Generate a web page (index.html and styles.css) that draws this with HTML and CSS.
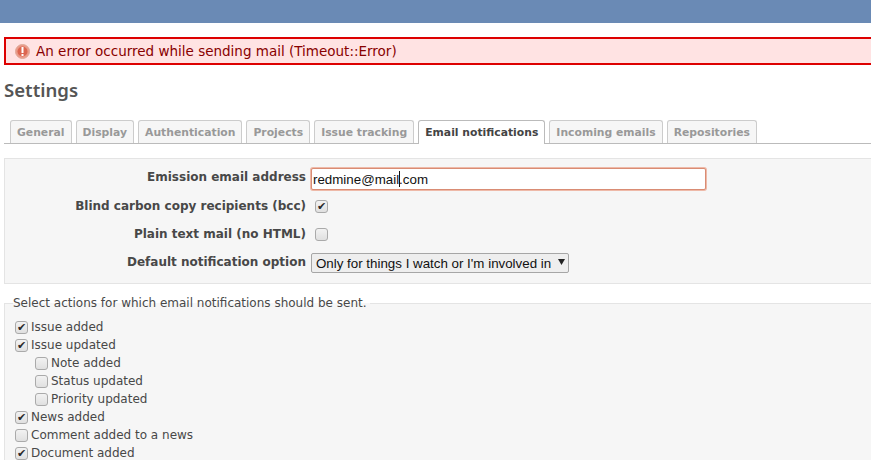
FILE: index.html
```html
<!DOCTYPE html>
<html lang="en">
<head>
  <meta charset="UTF-8">
  <title>Settings</title>
  <link rel="stylesheet" href="styles.css">
</head>
<body>

<div class="top-bar"></div>

<div class="content">
  <div class="flash-error">
    <svg class="flash-icon" width="15" height="15" viewBox="0 0 15 15">
      <circle cx="7.5" cy="7.5" r="7" fill="#eb9a88" stroke="#dfa898"/>
      <circle cx="7.5" cy="7.5" r="5" fill="#dc6650"/>
      <rect x="6.5" y="3" width="2" height="6" fill="#fff"/>
      <rect x="6.5" y="10" width="2" height="2" fill="#fff"/>
    </svg>
    An error occurred while sending mail (Timeout::Error)
  </div>

  <h2 class="page-title">Settings</h2>

  <ul class="tabs">
    <li class="tab">General</li>
    <li class="tab">Display</li>
    <li class="tab">Authentication</li>
    <li class="tab">Projects</li>
    <li class="tab">Issue tracking</li>
    <li class="tab selected">Email notifications</li>
    <li class="tab">Incoming emails</li>
    <li class="tab">Repositories</li>
  </ul>

  <div class="box">
    <div class="row row-email">
      <label class="row-label">Emission email address</label>
      <span class="email-wrap">
        <input class="email-input" type="text" value="redmine@mail.com">
        <span class="caret"></span>
      </span>
    </div>
    <div class="row row-check">
      <label class="row-label">Blind carbon copy recipients (bcc)</label>
      <input class="check" type="checkbox" checked>
    </div>
    <div class="row row-check">
      <label class="row-label">Plain text mail (no HTML)</label>
      <input class="check" type="checkbox">
    </div>
    <div class="row row-select">
      <label class="row-label">Default notification option</label>
      <select class="notify-select">
        <option>Only for things I watch or I'm involved in</option>
      </select>
    </div>
  </div>

  <fieldset class="actions">
    <legend>Select actions for which email notifications should be sent.</legend>
    <label class="action"><input class="check" type="checkbox" checked> Issue added</label>
    <label class="action"><input class="check" type="checkbox" checked> Issue updated</label>
    <label class="action sub"><input class="check" type="checkbox"> Note added</label>
    <label class="action sub"><input class="check" type="checkbox"> Status updated</label>
    <label class="action sub"><input class="check" type="checkbox"> Priority updated</label>
    <label class="action"><input class="check" type="checkbox" checked> News added</label>
    <label class="action"><input class="check" type="checkbox"> Comment added to a news</label>
    <label class="action"><input class="check" type="checkbox" checked> Document added</label>
  </fieldset>
</div>

</body>
</html>
```

FILE: styles.css
```css
html, body {
  height: 460px;
  overflow: hidden;
}

body {
  margin: 0;
  font-family: "DejaVu Sans", sans-serif;
  font-size: 12px;
  color: #484848;
  background: #fff;
}

.top-bar {
  height: 23px;
  background: #6a8ab5;
}

.content {
  padding: 14px 0 0 4px;
}

.flash-error {
  display: flex;
  align-items: center;
  gap: 6px;
  height: 24px;
  padding-left: 9px;
  border: 2px solid #dd0000;
  border-right: 0;
  background: #ffe3e3;
  color: #880000;
  font-size: 13.5px;
}

.flash-icon {
  flex: none;
}

.page-title {
  margin: 13px 0 0;
  font-family: "Noto Sans", sans-serif;
  font-size: 18.6px;
  line-height: 24px;
  font-weight: 600;
  color: #555;
}

.tabs {
  display: flex;
  gap: 4px;
  list-style: none;
  margin: 18px 0 0;
  padding: 0 0 0 6px;
  height: 23px;
  border-bottom: 1px solid #bbb;
}

.tab {
  height: 22px;
  padding: 0 6px;
  border: 1px solid #ccc;
  border-bottom: 0;
  border-radius: 3px 3px 0 0;
  background: #f6f6f6;
  color: #999;
  font-size: 10.8px;
  font-weight: bold;
  line-height: 23px;
}

.tab.selected {
  height: 23px;
  margin-bottom: -1px;
  background: #fff;
  border-color: #bbb;
  color: #444;
}

.box {
  margin-top: 14px;
  height: 124px;
  border: 1px solid #e4e4e4;
  border-right: 0;
  background: #f6f6f6;
}

.row {
  display: flex;
  align-items: center;
}

.row-label {
  width: 301px;
  margin-right: 5px;
  text-align: right;
  font-weight: bold;
}

.row-email {
  height: 22px;
  margin-top: 9px;
}

.row-email .row-label {
  margin-bottom: 4px;
}

.row-check {
  height: 28px;
}

.row-email + .row-check {
  margin-top: 2px;
}

.row-select {
  height: 28px;
}

.email-wrap {
  position: relative;
  display: block;
}

.email-input {
  display: block;
  box-sizing: border-box;
  width: 395px;
  height: 22px;
  margin: 0;
  padding: 0 1px;
  border: 1px solid #d98c74;
  border-radius: 2px;
  outline: 0;
  box-shadow: 0 0 0 1px #eeb9a8;
  background: #fff;
  font-family: "Liberation Sans", sans-serif;
  font-size: 13.33px;
  color: #111;
}

.caret {
  position: absolute;
  left: 88px;
  top: 3px;
  width: 1px;
  height: 16px;
  background: #111;
}

.check {
  appearance: none;
  box-sizing: border-box;
  display: inline-flex;
  align-items: center;
  justify-content: center;
  width: 13px;
  height: 13px;
  margin: 0 0 0 4px;
  border: 1px solid #aaa;
  border-radius: 3px;
  background: linear-gradient(#f2f2f2, #e0e0e0);
  color: #2a2a2a;
  font-size: 11px;
  line-height: 1;
}

.check:checked::before {
  content: "\2714";
}

.notify-select {
  appearance: none;
  box-sizing: border-box;
  width: 258px;
  height: 20px;
  margin: 2px 0 0;
  padding: 0 0 0 4px;
  border: 1px solid #a6a6a6;
  border-radius: 2px;
  background-color: #eee;
  background-image: url("data:image/svg+xml,%3Csvg xmlns='http://www.w3.org/2000/svg' width='7' height='6'%3E%3Cpath d='M0 0h7L3.5 6z' fill='%23222'/%3E%3C/svg%3E");
  background-repeat: no-repeat;
  background-position: 246px 5px;
  font-family: "Liberation Sans", sans-serif;
  font-size: 13.33px;
  color: #111;
}

.actions {
  margin: 12px 0 0;
  padding: 8px 0 0 7px;
  min-width: 0;
  border: 0;
  border-top: 1px solid #e4e4e4;
  border-left: 1px solid #e4e4e4;
  background: #f6f6f6;
}

.actions legend {
  padding: 0 3px 0 0;
  margin-left: 1px;
  font-size: 12px;
}

.action {
  display: flex;
  align-items: center;
  gap: 3px;
  height: 18px;
}

.action .check {
  margin: 0 0 0 3px;
}

.action.sub {
  padding-left: 20px;
}
```
